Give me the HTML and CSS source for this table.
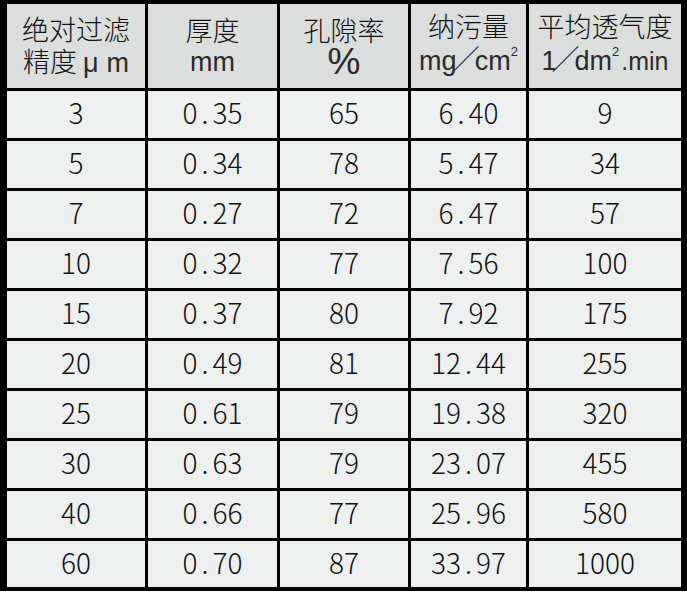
FILE: index.html
```html
<!DOCTYPE html>
<html lang="zh-CN">
<head>
<meta charset="utf-8">
<title>过滤参数表</title>
<link rel="stylesheet" href="styles.css">
</head>
<body>
<div class="tbl">
  <div class="c h"><div>绝对过滤</div><div>精度<span class="lat mu">μ</span><span class="lat">m</span></div></div>
  <div class="c h"><div>厚度</div><div class="lat">mm</div></div>
  <div class="c h"><div>孔隙率</div><div class="lat pct">%</div></div>
  <div class="c h"><div>纳污量</div><div class="lat">mg<span class="sl">／</span>cm<span class="sup">2</span></div></div>
  <div class="c h"><div>平均透气度</div><div class="lat">1<span class="sl">／</span>dm<span class="sup">2</span><span class="mn">.min</span></div></div>

  <div class="c">3</div><div class="c">0<span class="dp">.</span>35</div><div class="c">65</div><div class="c">6<span class="dp">.</span>40</div><div class="c">9</div>
  <div class="c">5</div><div class="c">0<span class="dp">.</span>34</div><div class="c">78</div><div class="c">5<span class="dp">.</span>47</div><div class="c">34</div>
  <div class="c">7</div><div class="c">0<span class="dp">.</span>27</div><div class="c">72</div><div class="c">6<span class="dp">.</span>47</div><div class="c">57</div>
  <div class="c">10</div><div class="c">0<span class="dp">.</span>32</div><div class="c">77</div><div class="c">7<span class="dp">.</span>56</div><div class="c">100</div>
  <div class="c">15</div><div class="c">0<span class="dp">.</span>37</div><div class="c">80</div><div class="c">7<span class="dp">.</span>92</div><div class="c">175</div>
  <div class="c">20</div><div class="c">0<span class="dp">.</span>49</div><div class="c">81</div><div class="c">12<span class="dp">.</span>44</div><div class="c">255</div>
  <div class="c">25</div><div class="c">0<span class="dp">.</span>61</div><div class="c">79</div><div class="c">19<span class="dp">.</span>38</div><div class="c">320</div>
  <div class="c">30</div><div class="c">0<span class="dp">.</span>63</div><div class="c">79</div><div class="c">23<span class="dp">.</span>07</div><div class="c">455</div>
  <div class="c">40</div><div class="c">0<span class="dp">.</span>66</div><div class="c">77</div><div class="c">25<span class="dp">.</span>96</div><div class="c">580</div>
  <div class="c">60</div><div class="c">0<span class="dp">.</span>70</div><div class="c">87</div><div class="c">33<span class="dp">.</span>97</div><div class="c">1000</div>
</div>
</body>
</html>
```
FILE: styles.css
```css
html, body {
  margin: 0;
  padding: 0;
  background: #ffffff;
}

.tbl {
  display: grid;
  grid-template-columns: 138px 129px 128px 115px 152px;
  grid-template-rows: 84px repeat(9, 47px) 46px;
  gap: 3px;
  width: fit-content;
  background: #000;
  border-style: solid;
  border-color: #000;
  border-width: 4px 6px 4px 7px;
  font-family: "Noto Sans CJK SC", "Noto Sans", sans-serif;
  font-weight: 300;
  color: #111;
}

.c {
  background: #eef0ef;
  display: flex;
  flex-direction: row;
  align-items: center;
  justify-content: center;
  padding-bottom: 5px;
  font-size: 28px;
  line-height: 32px;
  white-space: nowrap;
}

.h {
  flex-direction: column;
  background: #dcdedd;
  padding-bottom: 0;
  font-size: 27px;
  line-height: 32px;
}

.lat {
  font-family: "Liberation Sans", Arial, sans-serif;
  font-weight: 400;
  font-size: 27px;
  color: #2a2a2a;
}

.mu {
  margin: 0 8px 0 6px;
}

.pct {
  font-size: 37px;
}

.sl {
  font-family: "Noto Sans CJK SC", sans-serif;
  font-weight: 300;
  font-size: 28px;
  display: inline-block;
  margin: 0 -5px;
}

.sup {
  font-size: 13px;
  position: relative;
  top: -14px;
}

.mn {
  font-size: 25px;
  margin-left: 2px;
}

.dp {
  display: inline-block;
  width: 15px;
  text-align: center;
}
```
